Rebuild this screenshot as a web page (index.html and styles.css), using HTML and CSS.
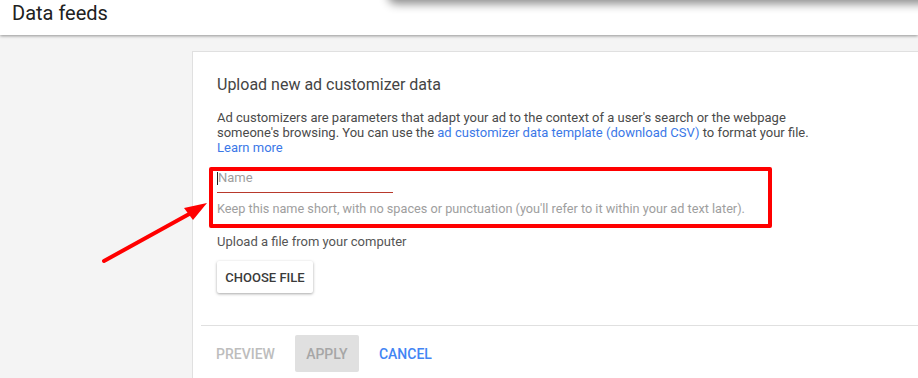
FILE: index.html
```html
<!DOCTYPE html>
<html lang="en">
<head>
<meta charset="utf-8">
<title>Data feeds</title>
<link rel="stylesheet" href="styles.css">
</head>
<body>
<div class="dialog-shadow"></div>
<header class="topbar">
  <h1 class="page-title">Data feeds</h1>
</header>
<main class="main">
  <div class="sidebar"></div>
  <section class="card">
    <div class="card-body">
      <h2 class="card-title">Upload new ad customizer data</h2>
      <p class="desc">Ad customizers are parameters that adapt your ad to the context of a user's search or the webpage someone's browsing. You can use the <a class="link" href="#">ad customizer data template (download CSV)</a> to format your file.<br><a class="link" href="#">Learn more</a></p>
      <div class="field">
        <div class="input"><span class="caret"></span><span class="placeholder">Name</span></div>
        <div class="hint">Keep this name short, with no spaces or punctuation (you'll refer to it within your ad text later).</div>
      </div>
      <div class="upload-label">Upload a file from your computer</div>
      <button class="btn-raised">CHOOSE FILE</button>
    </div>
    <div class="card-footer">
      <button class="btn-flat btn-disabled">PREVIEW</button>
      <button class="btn-flat btn-filled-disabled">APPLY</button>
      <button class="btn-flat btn-primary">CANCEL</button>
    </div>
  </section>
</main>
<div class="annot-box"></div>
<svg class="annot-arrow" width="120" height="75" viewBox="0 0 120 75">
  <line x1="9" y1="66" x2="96" y2="18" stroke="#ff0000" stroke-width="4" stroke-linecap="round"/>
  <polygon points="112,8 89,13 98,25" fill="#ff0000"/>
</svg>
</body>
</html>
```

FILE: styles.css
```css
html, body {
  margin: 0;
  padding: 0;
}
body {
  background: #f4f4f4;
  font-family: Roboto, "Liberation Sans", Arial, sans-serif;
  color: #212121;
  overflow: hidden;
  height: 378px;
  position: relative;
}
.dialog-shadow {
  position: absolute;
  top: -30px;
  left: 390px;
  right: -20px;
  height: 30px;
  background: #fff;
  border-radius: 6px;
  box-shadow: 0 2px 10px 2px rgba(0, 0, 0, 0.45);
  z-index: 5;
}
.topbar {
  height: 35px;
  background: #fff;
  box-shadow: 0 1px 3px rgba(0, 0, 0, 0.4);
  position: relative;
  z-index: 2;
  box-sizing: border-box;
  padding: 1px 0 0 12px;
}
.page-title {
  margin: 0;
  font-size: 20px;
  line-height: 24px;
  font-weight: 400;
  color: #212121;
}
.main {
  display: grid;
  grid-template-columns: 192px 1fr;
  padding-top: 16px;
}
.card {
  background: #fff;
  border: 1px solid #e0e0e0;
  border-right: none;
  border-bottom: none;
  height: 340px;
}
.card-body {
  padding: 23px 24px 0 24px;
}
.card-title {
  margin: 0 0 15px;
  font-size: 16px;
  line-height: 20px;
  font-weight: 400;
  color: #444;
}
.desc {
  margin: 0;
  max-width: 600px;
  font-size: 13px;
  line-height: 15px;
  color: #4a4a4a;
}
.link {
  display: inline-block;
  color: #3b78e7;
  text-decoration: none;
}
.field {
  margin-top: 15px;
}
.input {
  width: 176px;
  height: 22px;
  border-bottom: 1px solid #b8392c;
  display: flex;
  align-items: flex-start;
  font-size: 13px;
  line-height: 15px;
}
.caret {
  width: 1px;
  height: 13px;
  background: #222;
  margin-top: 2px;
}
.placeholder {
  color: #9e9e9e;
}
.hint {
  margin-top: 9px;
  font-size: 12.7px;
  line-height: 14px;
  color: #9e9e9e;
}
.upload-label {
  margin-top: 18px;
  font-size: 13px;
  line-height: 15px;
  color: #555;
}
.btn-raised {
  margin-top: 12px;
  height: 32px;
  padding: 0 8px;
  width: 96px;
  border: none;
  border-radius: 2px;
  background: #fff;
  box-shadow: 0 1px 3px rgba(0, 0, 0, 0.35);
  font-family: Roboto, "Liberation Sans", Arial, sans-serif;
  font-size: 13px;
  font-weight: 500;
  color: #3a3a3a;
  display: block;
}
.card-footer {
  margin: 32px 0 0 8px;
  border-top: 1px solid #e0e0e0;
  padding: 9px 0 0 7px;
  display: flex;
  gap: 12px;
}
.btn-flat {
  height: 37px;
  min-width: 64px;
  padding: 0 8px;
  border: none;
  border-radius: 2px;
  background: transparent;
  font-family: Roboto, "Liberation Sans", Arial, sans-serif;
  font-size: 14px;
  font-weight: 500;
}
.btn-disabled {
  color: #bdbdbd;
}
.btn-filled-disabled {
  background: #e0e0e0;
  color: #a6a6a6;
}
.btn-primary {
  color: #4285f4;
}
.annot-box {
  position: absolute;
  left: 209px;
  top: 167px;
  width: 563px;
  height: 61px;
  box-sizing: border-box;
  border: 4px solid #ff0000;
  border-radius: 2px;
}
.annot-arrow {
  position: absolute;
  left: 95px;
  top: 195px;
}
```
